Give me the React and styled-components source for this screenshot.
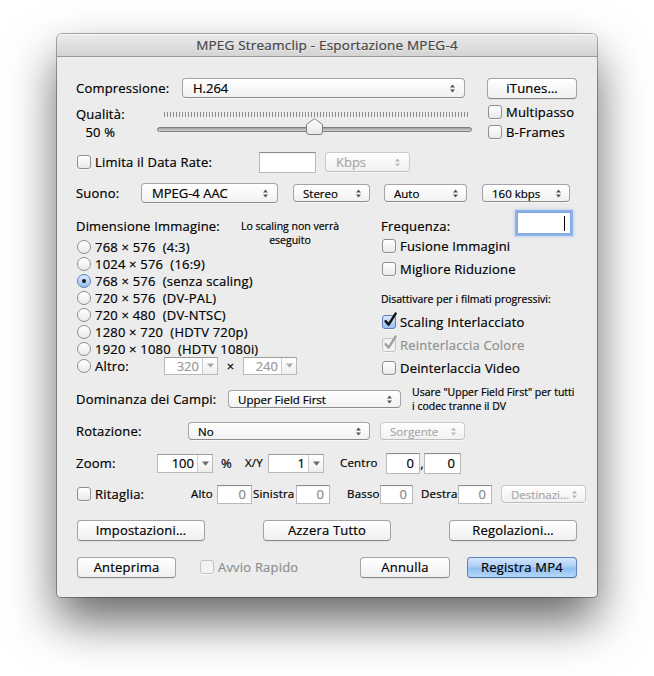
import React from 'react'
import styled, { createGlobalStyle, css } from 'styled-components'

const GlobalStyle = createGlobalStyle`
  html, body {
    margin: 0;
    padding: 0;
    background: #fff;
  }
  body {
    font-family: "Open Sans", "Liberation Sans", sans-serif;
    font-size: 13px;
    color: #000;
    -webkit-text-stroke: 0.2px currentColor;
  }
  * {
    box-sizing: border-box;
  }
`

const Page = styled.div`
  display: flex;
  justify-content: center;
  padding-top: 34px;
  height: 676px;
`

const Window = styled.div`
  width: 540px;
  height: 563px;
  display: flex;
  flex-direction: column;
  background: #ececec;
  border-radius: 5px 5px 4px 4px;
  box-shadow: 0 0 0 1px rgba(0, 0, 0, 0.32), 0 24px 48px rgba(0, 0, 0, 0.6);
  overflow: hidden;
`

const TitleBar = styled.div`
  height: 23px;
  flex: none;
  display: flex;
  align-items: center;
  justify-content: center;
  background: linear-gradient(#ebebeb, #d4d4d4);
  border-bottom: 1px solid #9a9a9a;
  box-shadow: inset 0 1px 0 rgba(255, 255, 255, 0.7);
  color: #444;
  font-size: 13.5px;
  letter-spacing: 0.2px;
  text-shadow: 0 1px 0 rgba(255, 255, 255, 0.5);
`

const Content = styled.div`
  flex: 1;
  display: flex;
  flex-direction: column;
  padding: 0 20px 0 19px;
`

const Row = styled.div`
  display: flex;
  align-items: ${p => p.$align || 'center'};
  flex: none;
  height: ${p => p.$h || 22}px;
  margin-top: ${p => p.$mt || 0}px;
  ${p => p.$between && css`justify-content: space-between;`}
`

const Label = styled.span`
  flex: none;
  display: inline-block;
  width: ${p => (p.$w ? p.$w + 'px' : 'auto')};
  margin-left: ${p => p.$ml || 0}px;
  font-size: ${p => p.$size || 13}px;
  line-height: ${p => p.$lh || 16}px;
  letter-spacing: 0.2px;
  color: ${p => (p.$dim ? '#8f8f8f' : '#000')};
  text-align: ${p => p.$align || 'left'};
  white-space: pre;
`

const Note = styled.div`
  flex: none;
  width: ${p => (p.$w ? p.$w + 'px' : 'auto')};
  margin-left: ${p => p.$ml || 0}px;
  margin-top: ${p => p.$mt || 0}px;
  font-size: 10.5px;
  line-height: 14px;
  text-align: ${p => p.$align || 'left'};
  white-space: nowrap;
  color: #000;
`

/* pop-up menus */

const PopUpBox = styled.div`
  flex: none;
  display: flex;
  align-items: center;
  width: ${p => p.$w}px;
  height: ${p => (p.$small ? 18 : 20)}px;
  margin-left: ${p => p.$ml || 0}px;
  padding: 0 ${p => (p.$small ? 8 : 9)}px 0 ${p => (p.$small ? 9 : 10)}px;
  font-size: ${p => (p.$small ? 11.5 : 13)}px;
  color: ${p => (p.$disabled ? '#a8a8a8' : '#000')};
  background: linear-gradient(#ffffff, #f1f1f1);
  border: 1px solid ${p => (p.$disabled ? '#c9c9c9' : '#a4a4a4')};
  border-bottom-color: ${p => (p.$disabled ? '#bdbdbd' : '#8c8c8c')};
  border-radius: 4px;
  box-shadow: 0 1px 0 rgba(255, 255, 255, 0.5);
  span {
    flex: 1;
    white-space: pre;
    overflow: hidden;
  }
`

function PopUp({ w, ml, small, disabled, children }) {
  return (
    <PopUpBox $w={w} $ml={ml} $small={small} $disabled={disabled}>
      <span>{children}</span>
      <svg width="5" height="9" viewBox="0 0 5 9">
        <path d="M0 3.6 L2.5 0.4 L5 3.6Z M0 5.4 L2.5 8.6 L5 5.4Z" fill={disabled ? '#b8b8b8' : '#555'} />
      </svg>
    </PopUpBox>
  )
}

/* push buttons */

const PushButton = styled.div`
  flex: none;
  display: flex;
  align-items: center;
  justify-content: center;
  width: ${p => p.$w}px;
  height: 21px;
  margin-left: ${p => (p.$auto ? 'auto' : (p.$ml || 0) + 'px')};
  font-size: 13px;
  letter-spacing: 0.2px;
  background: linear-gradient(#ffffff, #f0f0f0);
  border: 1px solid #a3a3a3;
  border-bottom-color: #8a8a8a;
  border-radius: 4px;
  box-shadow: 0 1px 1px rgba(0, 0, 0, 0.06);
  ${p =>
    p.$default &&
    css`
      background: linear-gradient(#d3e6fc 0%, #a9cdf5 48%, #8fbdf1 52%, #b5d8fb 100%);
      border-color: #5d84c0;
      border-bottom-color: #4a6ea8;
    `}
`

/* check boxes */

const CheckItem = styled.div`
  flex: none;
  display: flex;
  align-items: center;
  width: ${p => (p.$w ? p.$w + 'px' : 'auto')};
  margin-left: ${p => p.$ml || 0}px;
`

const Box = styled.span`
  position: relative;
  flex: none;
  width: 14px;
  height: 14px;
  margin: 0 4px 0 1px;
  border-radius: 3px;
  border: 1px solid #8f8f8f;
  background: linear-gradient(#ffffff, #e9e9e9);
  box-shadow: 0 1px 0 rgba(255, 255, 255, 0.6);
  ${p =>
    p.$checked &&
    !p.$disabled &&
    css`
      border-color: #5d7fb5;
      background: linear-gradient(#dcebfc, #93c0f2);
    `}
  ${p =>
    p.$disabled &&
    css`
      border-color: #c4c4c4;
      background: #f3f3f3;
    `}
  svg {
    position: absolute;
    left: 0px;
    top: -4px;
    overflow: visible;
  }
`

function Check({ label, checked, disabled, w, ml }) {
  return (
    <CheckItem $w={w} $ml={ml}>
      <Box $checked={checked} $disabled={disabled}>
        {checked && (
          <svg width="14" height="16" viewBox="0 0 14 16">
            <path
              d="M2.6 9.2 L5.6 12.6 L12.6 1.6"
              fill="none"
              stroke={disabled ? '#a2a2a2' : '#111'}
              strokeWidth="2.5"
              strokeLinecap="round"
              strokeLinejoin="round"
            />
          </svg>
        )}
      </Box>
      <Label $dim={disabled}>{label}</Label>
    </CheckItem>
  )
}

/* radio buttons */

const RadioItem = styled.div`
  flex: none;
  display: flex;
  align-items: center;
  height: 17px;
  width: ${p => (p.$w ? p.$w + 'px' : 'auto')};
`

const RadioDot = styled.span`
  flex: none;
  display: flex;
  align-items: center;
  justify-content: center;
  width: 14px;
  height: 14px;
  margin: 0 4px 0 1px;
  border-radius: 50%;
  border: 1px solid #8f8f8f;
  background: linear-gradient(#ffffff, #e9e9e9);
  ${p =>
    p.$on &&
    css`
      border-color: #5d7fb5;
      background: linear-gradient(#dcebfc, #93c0f2);
      &::after {
        content: '';
        width: 4px;
        height: 4px;
        border-radius: 50%;
        background: #1b1b1b;
      }
    `}
`

function Radio({ label, on, w }) {
  return (
    <RadioItem $w={w}>
      <RadioDot $on={on} />
      <Label>{label}</Label>
    </RadioItem>
  )
}

/* text fields and combo boxes */

const TextField = styled.div`
  flex: none;
  display: flex;
  align-items: center;
  justify-content: flex-end;
  width: ${p => p.$w}px;
  height: ${p => p.$h || 21}px;
  margin-left: ${p => p.$ml || 0}px;
  padding-right: 5px;
  font-size: 13px;
  color: ${p => (p.$dim ? '#8a8a8a' : '#000')};
  background: #fff;
  border: 1px solid #b9b9b9;
  border-top-color: #8d8d8d;
  box-shadow: inset 0 1px 1px rgba(0, 0, 0, 0.06);
  ${p =>
    p.$focus &&
    css`
      border-color: #7fa6dc;
      box-shadow: 0 0 0 2px rgba(120, 165, 230, 0.75), 0 0 3px 3px rgba(120, 165, 230, 0.35);
    `}
`

const Caret = styled.span`
  width: 1px;
  height: 15px;
  background: #000;
`

const ComboBox = styled.div`
  flex: none;
  display: flex;
  width: ${p => p.$w}px;
  height: ${p => p.$h || 18}px;
  margin-left: ${p => p.$ml || 0}px;
  background: #fff;
  border: 1px solid #bababa;
  border-top-color: #9c9c9c;
  font-size: 13px;
  color: ${p => (p.$dim ? '#9a9a9a' : '#000')};
`

const ComboText = styled.span`
  flex: 1;
  display: flex;
  align-items: center;
  justify-content: flex-end;
  padding-right: 3px;
`

const ComboArrow = styled.span`
  flex: none;
  width: 15px;
  display: flex;
  align-items: center;
  justify-content: center;
  border-left: 1px solid #cdcdcd;
  background: linear-gradient(#ffffff, #eeeeee);
`

function Combo({ value, w, ml, h, dim }) {
  return (
    <ComboBox $w={w} $ml={ml} $h={h} $dim={dim}>
      <ComboText>{value}</ComboText>
      <ComboArrow>
        <svg width="7" height="5" viewBox="0 0 7 5">
          <path d="M0 0.5 H7 L3.5 4.8Z" fill={dim ? '#a9a9a9' : '#6a6a6a'} />
        </svg>
      </ComboArrow>
    </ComboBox>
  )
}

/* quality slider */

const QualityLabels = styled.div`
  flex: none;
  width: 81px;
  padding-top: 6px;
  div {
    display: inline-flex;
    flex-direction: column;
    align-items: center;
    gap: 4px;
  }
`

const Slider = styled.div`
  position: relative;
  flex: none;
  width: 315px;
  height: 44px;
  padding-top: 13px;
`

const Ticks = styled.div`
  width: 304px;
  height: 5px;
  margin-left: 7px;
  background: repeating-linear-gradient(90deg, #8c8c8c 0 1px, transparent 1px 3px);
`

const Track = styled.div`
  height: 5px;
  margin-top: 10px;
  border-radius: 3px;
  border: 1px solid #7d7d7d;
  background: linear-gradient(#9d9d9d, #d6d6d6);
`

const Thumb = styled.svg`
  position: absolute;
  left: 149px;
  top: 19px;
`

const SideChecks = styled.div`
  flex: none;
  margin-left: 15px;
  padding-top: 3px;
  display: flex;
  flex-direction: column;
  > div {
    height: 20px;
  }
`

/* image size section */

const Section = styled.div`
  display: grid;
  grid-template-columns: 305px 1fr;
  margin-top: 8px;
`

const Column = styled.div`
  display: flex;
  flex-direction: column;
`

const Header = styled.div`
  display: flex;
  align-items: flex-start;
  height: 26px;
  padding-top: 6px;
`

const FreqRow = styled.div`
  display: flex;
  align-items: flex-start;
  justify-content: space-between;
  height: 22px;
  padding-right: 6px;
  > span {
    padding-top: 6px;
  }
`

const sizes = [
  '768 × 576  (4:3)',
  '1024 × 576  (16:9)',
  '768 × 576  (senza scaling)',
  '720 × 576  (DV-PAL)',
  '720 × 480  (DV-NTSC)',
  '1280 × 720  (HDTV 720p)',
  '1920 × 1080  (HDTV 1080i)'
]

export default function App() {
  return (
    <>
      <GlobalStyle />
      <Page>
        <Window>
          <TitleBar>MPEG Streamclip - Esportazione MPEG-4</TitleBar>
          <Content>
            <Row $mt={20}>
              <Label $w={106}>Compressione:</Label>
              <PopUp w={283}>H.264</PopUp>
              <PushButton $w={90} $ml={22}>iTunes…</PushButton>
            </Row>

            <Row $h={44} $align='flex-start'>
              <QualityLabels>
                <div>
                  <Label $lh={14}>Qualità:</Label>
                  <Label $lh={14}>50 %</Label>
                </div>
              </QualityLabels>
              <Slider>
                <Ticks />
                <Track />
                <Thumb width="17" height="17" viewBox="0 0 17 17">
                  <defs>
                    <linearGradient id="thumbFill" x1="0" y1="0" x2="0" y2="1">
                      <stop offset="0" stopColor="#ffffff" />
                      <stop offset="1" stopColor="#e6e6e6" />
                    </linearGradient>
                  </defs>
                  <path
                    d="M0.5 6.5 L8.5 0.6 L16.5 6.5 V14 Q16.5 16.5 14 16.5 H3 Q0.5 16.5 0.5 14 Z"
                    fill="url(#thumbFill)"
                    stroke="#808080"
                  />
                </Thumb>
              </Slider>
              <SideChecks>
                <Check label="Multipasso" />
                <Check label="B-Frames" />
              </SideChecks>
            </Row>

            <Row $mt={8}>
              <Check w={183} label="Limita il Data Rate:" />
              <TextField $w={57} />
              <PopUp w={85} ml={9} disabled>Kbps</PopUp>
            </Row>

            <Row $mt={9}>
              <Label $w={65}>Suono:</Label>
              <PopUp w={137}>MPEG-4 AAC</PopUp>
              <PopUp w={77} ml={15} small>Stereo</PopUp>
              <PopUp w={83} ml={14} small>Auto</PopUp>
              <PopUp w={88} ml={15} small>160 kbps</PopUp>
            </Row>

            <Section>
              <Column>
                <Header>
                  <Label $w={164}>Dimensione Immagine:</Label>
                  <Note $w={100} $mt={1} $align='center'>
                    Lo scaling non verrà
                    <br />
                    eseguito
                  </Note>
                </Header>
                {sizes.map((s, i) => (
                  <Radio key={s} label={s} on={i === 2} />
                ))}
                <RadioItem>
                  <Radio w={88} label="Altro:" />
                  <Combo value="320" w={54} dim />
                  <Label $w={25} $align='center'>×</Label>
                  <Combo value="240" w={54} dim />
                </RadioItem>
              </Column>

              <Column>
                <FreqRow>
                  <Label>Frequenza:</Label>
                  <TextField $w={54} $h={22} $focus>
                    <Caret />
                  </TextField>
                </FreqRow>
                <Row $h={23}>
                  <Check label="Fusione Immagini" />
                </Row>
                <Row $h={23}>
                  <Check label="Migliore Riduzione" />
                </Row>
                <Note $mt={12}>Disattivare per i filmati progressivi:</Note>
                <Row $h={23} $mt={4}>
                  <Check label="Scaling Interlacciato" checked />
                </Row>
                <Row $h={23}>
                  <Check label="Reinterlaccia Colore" checked disabled />
                </Row>
                <Row $h={23}>
                  <Check label="Deinterlaccia Video" />
                </Row>
              </Column>
            </Section>

            <Row $mt={9}>
              <Label $w={152}>Dominanza dei Campi:</Label>
              <PopUp w={173} small>Upper Field First</PopUp>
              <Note $ml={11}>
                Usare "Upper Field First" per tutti
                <br />i codec tranne il DV
              </Note>
            </Row>

            <Row $mt={10}>
              <Label $w={112}>Rotazione:</Label>
              <PopUp w={182} small>No</PopUp>
              <PopUp w={85} ml={10} small disabled>Sorgente</PopUp>
            </Row>

            <Row $mt={10}>
              <Label $w={81}>Zoom:</Label>
              <Combo value="100" w={56} h={19} />
              <Label $w={24} $ml={8}>%</Label>
              <Label $w={23} $size={11.5}>X/Y</Label>
              <Combo value="1" w={56} h={19} />
              <Label $w={46} $ml={16} $size={11.5}>Centro</Label>
              <TextField $w={34}>0</TextField>
              <Label $w={4} $align='center'>,</Label>
              <TextField $w={37}>0</TextField>
            </Row>

            <Row $mt={9}>
              <Check w={115} label="Ritaglia:" />
              <Label $w={26} $size={11.5}>Alto</Label>
              <TextField $w={35} $h={19} $dim>0</TextField>
              <Label $w={43} $ml={1} $size={11.5}>Sinistra</Label>
              <TextField $w={34} $h={19} $dim>0</TextField>
              <Label $w={33} $ml={17} $size={11.5}>Basso</Label>
              <TextField $w={33} $h={19} $dim>0</TextField>
              <Label $w={37} $ml={8} $size={11.5}>Destra</Label>
              <TextField $w={34} $h={19} $dim>0</TextField>
              <PopUp w={85} ml={9} small disabled>Destinazi…</PopUp>
            </Row>

            <Row $mt={14} $between>
              <PushButton $w={128} $ml={1}>Impostazioni…</PushButton>
              <PushButton $w={128}>Azzera Tutto</PushButton>
              <PushButton $w={128}>Regolazioni…</PushButton>
            </Row>

            <Row $mt={15}>
              <PushButton $w={99} $ml={1}>Anteprima</PushButton>
              <Check ml={23} label="Avvio Rapido" disabled />
              <PushButton $w={90} $auto>Annulla</PushButton>
              <PushButton $w={110} $ml={17} $default>Registra MP4</PushButton>
            </Row>
          </Content>
        </Window>
      </Page>
    </>
  )
}
